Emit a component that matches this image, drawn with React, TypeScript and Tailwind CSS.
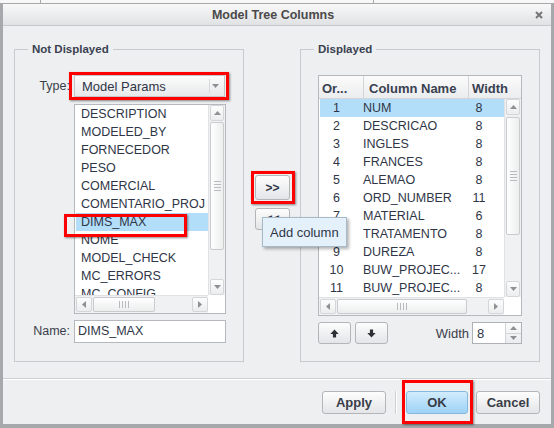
import React from "react";

const LEFT_ITEMS = [
  "DESCRIPTION",
  "MODELED_BY",
  "FORNECEDOR",
  "PESO",
  "COMERCIAL",
  "COMENTARIO_PROJ",
  "DIMS_MAX",
  "NOME",
  "MODEL_CHECK",
  "MC_ERRORS",
  "MC_CONFIG",
];

const COLUMNS: [string, string, string][] = [
  ["1", "NUM", "8"],
  ["2", "DESCRICAO", "8"],
  ["3", "INGLES", "8"],
  ["4", "FRANCES", "8"],
  ["5", "ALEMAO", "8"],
  ["6", "ORD_NUMBER", "11"],
  ["7", "MATERIAL", "6"],
  ["8", "TRATAMENTO", "8"],
  ["9", "DUREZA", "8"],
  ["10", "BUW_PROJEC...", "17"],
  ["11", "BUW_PROJEC...", "8"],
];

type Dir = "up" | "down" | "left" | "right";

function Arrow({ dir }: { dir: Dir }) {
  if (dir === "up")
    return (
      <svg width="7" height="4" viewBox="0 0 7 4">
        <polygon points="0,4 3.5,0 7,4" fill="#8d9095" />
      </svg>
    );
  if (dir === "down")
    return (
      <svg width="7" height="4" viewBox="0 0 7 4">
        <polygon points="0,0 3.5,4 7,0" fill="#8d9095" />
      </svg>
    );
  if (dir === "left")
    return (
      <svg width="4" height="7" viewBox="0 0 4 7">
        <polygon points="4,0 0,3.5 4,7" fill="#8d9095" />
      </svg>
    );
  return (
    <svg width="4" height="7" viewBox="0 0 4 7">
      <polygon points="0,0 4,3.5 0,7" fill="#8d9095" />
    </svg>
  );
}

function ScrollBtn({ dir, className }: { dir: Dir; className: string }) {
  return (
    <div
      className={`${className} flex items-center justify-center rounded-[2px] border border-[#d4d6d9] bg-gradient-to-b from-[#fdfdfd] to-[#ecedee]`}
    >
      <Arrow dir={dir} />
    </div>
  );
}

function Grip({ horizontal }: { horizontal?: boolean }) {
  if (horizontal)
    return (
      <div className="flex gap-[2px]">
        <div className="w-px h-[7px] bg-[#b8babd]" />
        <div className="w-px h-[7px] bg-[#b8babd]" />
        <div className="w-px h-[7px] bg-[#b8babd]" />
        <div className="w-px h-[7px] bg-[#b8babd]" />
      </div>
    );
  return (
    <div className="flex flex-col gap-[2px]">
      <div className="w-[7px] h-px bg-[#b8babd]" />
      <div className="w-[7px] h-px bg-[#b8babd]" />
      <div className="w-[7px] h-px bg-[#b8babd]" />
      <div className="w-[7px] h-px bg-[#b8babd]" />
    </div>
  );
}

function VScroll({ thumb }: { thumb: string }) {
  return (
    <div className="w-[17px] flex flex-col bg-[#f0f1f2] border-l border-[#e0e2e4] px-px">
      <ScrollBtn dir="up" className="h-[16px]" />
      <div className="flex-1 flex flex-col">
        <div
          className={`${thumb} flex items-center justify-center rounded-[2px] border border-[#c9cbce] bg-gradient-to-r from-[#ffffff] to-[#eceded]`}
        >
          <Grip />
        </div>
      </div>
      <ScrollBtn dir="down" className="h-[16px]" />
    </div>
  );
}

function HScroll({ thumb }: { thumb: string }) {
  return (
    <div className="flex-1 flex bg-[#f0f1f2] border-t border-[#e0e2e4] py-px pl-px">
      <ScrollBtn dir="left" className="w-[16px]" />
      <div className="flex-1 flex px-px">
        <div
          className={`${thumb} flex items-center justify-center rounded-[2px] border border-[#c9cbce] bg-gradient-to-b from-[#ffffff] to-[#eceded]`}
        >
          <Grip horizontal />
        </div>
      </div>
      <ScrollBtn dir="right" className="w-[16px]" />
    </div>
  );
}

function GroupBox({
  title,
  className,
  children,
}: {
  title: string;
  className: string;
  children: React.ReactNode;
}) {
  return (
    <div className={`relative border border-[#c8cacd] ${className}`}>
      <span className="absolute -top-[8px] left-[13px] px-[4px] bg-[#eeeff1] text-[11.5px] font-bold leading-[14px] text-[#3a4150]">
        {title}
      </span>
      {children}
    </div>
  );
}

function MoveArrow({ up }: { up?: boolean }) {
  return (
    <svg width="9" height="9" viewBox="0 0 9 9">
      <path
        d={
          up
            ? "M4.5 0.5 L8.7 4.9 L6.1 4.9 L6.1 8.6 L2.9 8.6 L2.9 4.9 L0.3 4.9 Z"
            : "M4.5 8.5 L8.7 4.1 L6.1 4.1 L6.1 0.4 L2.9 0.4 L2.9 4.1 L0.3 4.1 Z"
        }
        fill="#2d3036"
      />
    </svg>
  );
}

const btnFace =
  "rounded-[3px] border border-[#b3b5b9] bg-gradient-to-b from-[#fdfdfd] to-[#e4e5e7] flex items-center justify-center";

export default function App() {
  return (
    <div className="w-[554px] h-[428px] overflow-hidden flex flex-col bg-[#f7f7f7] font-['Liberation_Sans',Arial,sans-serif] text-[#2f3647]">
      {/* desktop behind the dialog */}
      <div className="h-[3px] flex shrink-0">
        <div className="w-[40px]" />
        <div className="w-px bg-[#a9a9a9]" />
        <div className="w-[332px]" />
        <div className="w-px bg-[#a9a9a9]" />
      </div>

      {/* dialog window */}
      <div className="flex-1 min-h-0 flex flex-col border-t border-l-[3px] border-r-[3px] border-b-[4px] border-[#a6a8ab] bg-[#eeeff1]">
        {/* title bar */}
        <div className="h-[22px] shrink-0 flex items-center border-b border-[#c4c7cb] bg-gradient-to-b from-[#f8f8f9] to-[#e1e2e4]">
          <div className="flex-1" />
          <div className="text-[12.5px] font-bold leading-none text-[#4a4a4a] pt-[1px]">
            Model Tree Columns
          </div>
          <div className="flex-1 flex justify-end pr-[8px] pt-[1px]">
            <svg width="8" height="8" viewBox="0 0 8 8">
              <path d="M1 1 L7 7 M7 1 L1 7" stroke="#767676" strokeWidth="2" />
            </svg>
          </div>
        </div>

        {/* main area */}
        <div className="h-[352px] shrink-0 flex items-start pl-[11px] pt-[23px]">
          {/* Not Displayed */}
          <GroupBox title="Not Displayed" className="w-[230px] h-[313px] pt-[25px]">
            <div className="flex items-center h-[22px]">
              <div className="w-[55px] text-right text-[12.5px] leading-none text-[#3a404b]">
                Type:
              </div>
              <div className="relative ml-[4px] w-[151px] h-[22px] flex items-center border border-[#c3c5c8] bg-gradient-to-b from-[#fcfcfc] to-[#e7e8ea]">
                <div className="flex-1 pl-[7px] text-[13px] leading-none">Model Params</div>
                <div className="w-[12px] h-[14px] mr-[3px] flex items-center justify-center border-l border-[#d8d9db]">
                  <Arrow dir="down" />
                </div>
                <div className="absolute -left-[6px] -right-[5px] -top-[4px] -bottom-[4px] border-[3px] border-[#fe0000] shadow-[1px_1px_2px_rgba(0,0,0,0.45)]" />
              </div>
            </div>

            <div className="relative ml-[59px] mt-[7px] w-[152px] h-[210px] border border-[#b5b8bc] bg-white flex flex-col">
              <div className="h-[190px] flex">
                <div className="flex-1 overflow-hidden pl-px text-[12.5px] leading-[18px]">
                  {LEFT_ITEMS.map((t) => (
                    <div
                      key={t}
                      className={
                        t === "DIMS_MAX"
                          ? "h-[18px] pl-[5px] whitespace-nowrap bg-[#b3def9]"
                          : "h-[18px] pl-[5px] whitespace-nowrap"
                      }
                    >
                      {t}
                    </div>
                  ))}
                </div>
                <VScroll thumb="mt-[1px] h-[128px]" />
              </div>
              <div className="h-[18px] flex">
                <HScroll thumb="w-[62px]" />
                <div className="w-[17px] bg-white" />
              </div>
              <div className="absolute left-[-11px] top-[109px] w-[123px] h-[23px] border-[3px] border-[#fe0000] shadow-[1px_1px_2px_rgba(0,0,0,0.45)]" />
            </div>

            <div className="flex items-center mt-[6px]">
              <div className="w-[55px] text-right text-[12.5px] leading-none text-[#3a404b]">
                Name:
              </div>
              <div className="ml-[4px] w-[152px] h-[23px] flex items-center border border-[#b5b8bc] bg-white pl-[3px] text-[12.5px] leading-none">
                DIMS_MAX
              </div>
            </div>
          </GroupBox>

          {/* move buttons */}
          <div className="relative w-[56px] h-[313px] pl-[11px] pt-[126px] flex flex-col items-start">
            <div className={`relative w-[35px] h-[25px] ${btnFace} text-[12px] font-bold leading-none`}>
              &gt;&gt;
              <div className="absolute -left-[5px] -right-[6px] -top-[5px] -bottom-[5px] border-[3px] border-[#fe0000] shadow-[1px_1px_2px_rgba(0,0,0,0.45)]" />
            </div>
            <div className={`mt-[8px] w-[35px] h-[22px] ${btnFace} text-[12px] font-bold leading-none`}>
              &lt;&lt;
            </div>
            <div className="absolute z-10 left-[18px] top-[168px] w-[85px] h-[30px] flex items-center pl-[7px] border border-[#a6b9c9] bg-[#e4f1fb] shadow-[2px_2px_3px_rgba(0,0,0,0.3)] text-[13px] leading-none whitespace-nowrap">
              Add column
            </div>
          </div>

          {/* Displayed */}
          <GroupBox title="Displayed" className="w-[240px] h-[313px] pt-[25px] pl-[17px]">
            <div className="w-[204px] h-[241px] border border-[#b5b8bc] bg-white flex flex-col">
              <div className="h-[23px] shrink-0 flex border-b border-[#d3d5d8] bg-gradient-to-b from-[#fbfbfb] to-[#ebecee] text-[13px] font-bold leading-[14px] text-[#3a4150]">
                <div className="w-[45px] pl-[3px] pt-[6px] border-r border-[#d3d5d8] whitespace-nowrap">
                  Or...
                </div>
                <div className="w-[105px] pl-[5px] pt-[6px] border-r border-[#d3d5d8] whitespace-nowrap">
                  Column Name
                </div>
                <div className="flex-1 pl-[3px] pt-[6px]">Width</div>
              </div>
              <div className="h-[198px] shrink-0 flex">
                <div className="flex-1 overflow-hidden pl-px text-[12.5px] leading-[18px]">
                  {COLUMNS.map(([n, name, w]) => (
                    <div
                      key={n}
                      className={n === "1" ? "h-[18px] flex bg-[#b3def9]" : "h-[18px] flex"}
                    >
                      <div className="w-[33px] text-center">{n}</div>
                      <div className="w-[113px] pl-[10px] whitespace-nowrap">{name}</div>
                      <div className="w-[26px] text-center">{w}</div>
                    </div>
                  ))}
                </div>
                <VScroll thumb="mt-[2px] h-[118px]" />
              </div>
              <div className="h-[18px] flex">
                <HScroll thumb="w-[130px]" />
                <div className="w-[17px] bg-white" />
              </div>
            </div>

            <div className="w-[204px] mt-[6px] flex items-center">
              <div className={`w-[33px] h-[22px] ${btnFace}`}>
                <MoveArrow up />
              </div>
              <div className={`ml-[4px] w-[33px] h-[22px] ${btnFace}`}>
                <MoveArrow />
              </div>
              <div className="flex-1" />
              <div className="text-[13px] leading-none text-[#3a404b]">Width</div>
              <div className="ml-[3px] w-[50px] h-[22px] flex border border-[#aeb1b5] bg-white">
                <div className="flex-1 pl-[4px] flex items-center text-[13px] leading-none">8</div>
                <div className="w-[16px] flex flex-col border-l border-[#d2d4d7] bg-gradient-to-b from-[#fbfbfb] to-[#ebecee]">
                  <div className="flex-1 flex items-center justify-center border-b border-[#d2d4d7]">
                    <Arrow dir="up" />
                  </div>
                  <div className="flex-1 flex items-center justify-center">
                    <Arrow dir="down" />
                  </div>
                </div>
              </div>
            </div>
          </GroupBox>
        </div>

        {/* separator */}
        <div className="h-px shrink-0 bg-[#cdd0d3]" />
        <div className="h-px shrink-0 bg-white" />

        {/* dialog buttons */}
        <div className="flex-1 flex justify-end items-start pt-[11px] pr-[11px] text-[13px] font-bold leading-none text-[#383d47]">
          <div className={`w-[64px] h-[23px] ${btnFace}`}>Apply</div>
          <div className="ml-[9px] w-[2px] h-[23px] flex">
            <div className="w-px bg-[#cfd1d4]" />
            <div className="w-px bg-white" />
          </div>
          <div className="relative ml-[9px] w-[62px] h-[23px] rounded-[3px] border border-[#84b8dc] bg-gradient-to-b from-[#d2ecfd] to-[#9dd2f6] flex items-center justify-center">
            OK
            <div className="absolute -left-[5px] -right-[6px] -top-[12px] -bottom-[11px] border-[3px] border-[#fe0000] shadow-[1px_1px_2px_rgba(0,0,0,0.45)]" />
          </div>
          <div className={`ml-[8px] w-[64px] h-[23px] ${btnFace}`}>Cancel</div>
        </div>
      </div>
    </div>
  );
}
